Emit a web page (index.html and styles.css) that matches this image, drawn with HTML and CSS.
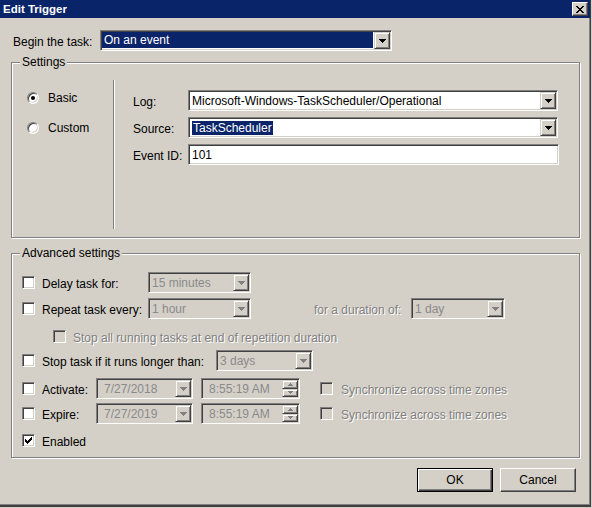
FILE: index.html
```html
<!DOCTYPE html>
<html lang="en">
<head>
    <meta charset="UTF-8">
    <title>Edit Trigger</title>
    <link rel="stylesheet" href="styles.css">
</head>
<body>
    <svg class="defs" width="0" height="0">
        <defs>
            <path id="tri" d="M0 0h7v1h-1v1h-1v1h-1v1h-1v-1h-1v-1h-1v-1h-1z"/>
            <path id="up" d="M2 0h1v1h1v1h1v1h-5v-1h1v-1h1z"/>
            <path id="down" d="M0 0h5v1h-1v1h-1v1h-1v-1h-1v-1h-1z"/>
        </defs>
    </svg>

    <div class="window">
        <div class="titlebar">
            <span class="title">Edit Trigger</span>
            <span class="close-btn">
                <svg width="8" height="7" viewBox="0 0 8 7" shape-rendering="crispEdges">
                    <path d="M0 0h2v1h1v1h2v-1h1v-1h2v1h-1v1h-1v1h-1v1h1v1h1v1h1v1h-2v-1h-1v-1h-2v1h-1v1h-2v-1h1v-1h1v-1h1v-1h-1v-1h-1v-1h-1z"/>
                </svg>
            </span>
        </div>

        <div class="content">
            <div class="begin-row">
                <span class="lbl begin-lbl">Begin the task:</span>
                <div class="combo begin-combo">
                    <div class="combo-text"><span class="hl-fill">On an event</span></div>
                    <span class="drop"><svg width="7" height="4"><use href="#tri"/></svg></span>
                </div>
            </div>

            <div class="group settings">
                <div class="group-title">Settings</div>
                <div class="settings-body">
                    <div class="modes">
                        <div class="mode"><span class="radio"><span class="dot"></span></span><span class="lbl">Basic</span></div>
                        <div class="mode"><span class="radio"></span><span class="lbl">Custom</span></div>
                    </div>
                    <div class="sep"></div>
                    <div class="fields">
                        <div class="field">
                            <span class="lbl field-lbl">Log:</span>
                            <div class="combo w370">
                                <div class="combo-text">Microsoft-Windows-TaskScheduler/Operational</div>
                                <span class="drop"><svg width="7" height="4"><use href="#tri"/></svg></span>
                            </div>
                        </div>
                        <div class="field">
                            <span class="lbl field-lbl">Source:</span>
                            <div class="combo w370">
                                <div class="combo-text"><span class="hl">TaskScheduler</span></div>
                                <span class="drop"><svg width="7" height="4"><use href="#tri"/></svg></span>
                            </div>
                        </div>
                        <div class="field">
                            <span class="lbl field-lbl">Event ID:</span>
                            <div class="combo w371">
                                <div class="combo-text">101</div>
                            </div>
                        </div>
                    </div>
                </div>
            </div>

            <div class="group advanced">
                <div class="group-title">Advanced settings</div>

                <div class="adv-row r-delay">
                    <span class="check"></span>
                    <span class="lbl w106">Delay task for:</span>
                    <div class="combo disabled w103">
                        <div class="combo-text">15 minutes</div>
                        <span class="drop"><svg width="7" height="4"><use href="#tri"/></svg></span>
                    </div>
                </div>

                <div class="adv-row r-repeat">
                    <span class="check"></span>
                    <span class="lbl w106">Repeat task every:</span>
                    <div class="combo disabled w103">
                        <div class="combo-text">1 hour</div>
                        <span class="drop"><svg width="7" height="4"><use href="#tri"/></svg></span>
                    </div>
                    <span class="lbl off duration-lbl">for a duration of:</span>
                    <div class="combo disabled w94">
                        <div class="combo-text">1 day</div>
                        <span class="drop"><svg width="7" height="4"><use href="#tri"/></svg></span>
                    </div>
                </div>

                <div class="adv-row r-stopall">
                    <span class="check off indent"></span>
                    <span class="lbl off">Stop all running tasks at end of repetition duration</span>
                </div>

                <div class="adv-row r-stoptask">
                    <span class="check"></span>
                    <span class="lbl w174">Stop task if it runs longer than:</span>
                    <div class="combo disabled w97">
                        <div class="combo-text">3 days</div>
                        <span class="drop"><svg width="7" height="4"><use href="#tri"/></svg></span>
                    </div>
                </div>

                <div class="adv-row r-activate">
                    <span class="check"></span>
                    <span class="lbl w54">Activate:</span>
                    <div class="combo disabled w97">
                        <div class="combo-text date-text">7/27/2018</div>
                        <span class="drop"><svg width="7" height="4"><use href="#tri"/></svg></span>
                    </div>
                    <div class="combo disabled time">
                        <div class="combo-text time-text">8:55:19 AM</div>
                        <span class="spin">
                            <span class="spin-btn"><svg width="5" height="3"><use href="#up"/></svg></span>
                            <span class="spin-btn"><svg width="5" height="3"><use href="#down"/></svg></span>
                        </span>
                    </div>
                    <span class="check off sync"></span>
                    <span class="lbl off">Synchronize across time zones</span>
                </div>

                <div class="adv-row r-expire">
                    <span class="check"></span>
                    <span class="lbl w54">Expire:</span>
                    <div class="combo disabled w97">
                        <div class="combo-text date-text">7/27/2019</div>
                        <span class="drop"><svg width="7" height="4"><use href="#tri"/></svg></span>
                    </div>
                    <div class="combo disabled time">
                        <div class="combo-text time-text">8:55:19 AM</div>
                        <span class="spin">
                            <span class="spin-btn"><svg width="5" height="3"><use href="#up"/></svg></span>
                            <span class="spin-btn"><svg width="5" height="3"><use href="#down"/></svg></span>
                        </span>
                    </div>
                    <span class="check off sync"></span>
                    <span class="lbl off">Synchronize across time zones</span>
                </div>

                <div class="adv-row r-enabled">
                    <span class="check">
                        <svg width="7" height="7" shape-rendering="crispEdges">
                            <path d="M0 2h1v3h-1zM1 3h1v3h-1zM2 4h1v3h-1zM3 3h1v3h-1zM4 2h1v3h-1zM5 1h1v3h-1zM6 0h1v3h-1z"/>
                        </svg>
                    </span>
                    <span class="lbl">Enabled</span>
                </div>
            </div>

            <div class="buttons">
                <span class="btn default">OK</span>
                <span class="btn">Cancel</span>
            </div>
        </div>
    </div>
</body>
</html>
```

FILE: styles.css
```css
body {
    margin: 0;
    background: #d4d0c8;
    font-family: "Liberation Sans", Arial, sans-serif;
    font-size: 12px;
    color: #000;
}
.defs {
    position: absolute;
}
svg {
    display: block;
    fill: currentColor;
    shape-rendering: crispEdges;
}
.window {
    width: 591px;
    height: 507px;
    box-sizing: border-box;
    border-right: 1px solid #404040;
    border-bottom: 2px solid #404040;
    box-shadow: inset -1px -1px #808080;
    background: #d4d0c8;
}

/* title bar */
.titlebar {
    height: 18px;
    background: #0a246a;
    color: #fff;
    display: flex;
    align-items: center;
    justify-content: space-between;
}
.title {
    font-weight: bold;
    font-size: 11.5px;
    padding-left: 3px;
}
.close-btn {
    width: 16px;
    height: 14px;
    box-sizing: border-box;
    margin-right: 2px;
    background: #d4d0c8;
    color: #000;
    border: 1px solid;
    border-color: #fff #404040 #404040 #fff;
    box-shadow: inset -1px -1px #808080;
    display: flex;
    align-items: center;
    justify-content: center;
}

.content {
    padding: 12px 0 0 11px;
}
.lbl {
    flex: none;
    white-space: nowrap;
}
.lbl.off {
    color: #808080;
    text-shadow: 1px 1px #fff;
}

/* sunken combo / edit boxes */
.combo {
    flex: none;
    display: flex;
    height: 21px;
    box-sizing: border-box;
    padding: 1px;
    background: #fff;
    border: 1px solid;
    border-color: #808080 #fff #fff #808080;
    box-shadow: inset 1px 1px #404040, inset -1px -1px #d4d0c8;
}
.combo-text {
    flex: 1;
    display: flex;
    align-items: center;
    padding-left: 2px;
    white-space: nowrap;
    overflow: hidden;
}
.combo.disabled {
    background: #d4d0c8;
    color: #8a8a8a;
}
.drop {
    width: 16px;
    flex: none;
    box-sizing: border-box;
    background: #d4d0c8;
    border: 1px solid;
    border-color: #d4d0c8 #404040 #404040 #d4d0c8;
    box-shadow: inset 1px 1px #fff, inset -1px -1px #808080;
    display: flex;
    align-items: center;
    justify-content: center;
    color: #000;
}
.disabled .drop {
    color: #808080;
}
.hl {
    background: #0a246a;
    color: #fff;
    padding: 0 1px;
    line-height: 14px;
}
.w370 { width: 370px; }
.w371 { width: 371px; }
.w103 { width: 103px; }
.w97 { width: 97px; }
.w94 { width: 94px; }

/* begin the task */
.begin-row {
    display: flex;
    align-items: center;
    height: 21px;
}
.begin-lbl {
    width: 87px;
    padding: 2px 0 0 2px;
}
.begin-combo {
    width: 292px;
}
.begin-combo .combo-text {
    padding: 0 1px 1px 0;
}
.hl-fill {
    flex: 1;
    align-self: stretch;
    display: flex;
    align-items: center;
    background: #0a246a;
    color: #fff;
    padding-left: 2px;
}

/* group boxes */
.group {
    width: 569px;
    box-sizing: border-box;
    border: 1px solid #808080;
    box-shadow: inset 1px 1px #fff, 1px 1px #fff;
}
.group-title {
    width: fit-content;
    margin: -8px 0 0 8px;
    padding: 0 2px;
    line-height: 14px;
    background: #d4d0c8;
}
.settings {
    margin-top: 11px;
    height: 176px;
}
.advanced {
    margin-top: 15px;
    height: 205px;
}

.settings-body {
    display: flex;
    margin-top: 11px;
}
.modes {
    width: 86px;
    padding: 8px 0 0 15px;
    display: flex;
    flex-direction: column;
    gap: 10px;
}
.mode {
    display: flex;
    align-items: center;
    height: 20px;
    gap: 9px;
}
.radio {
    width: 12px;
    height: 12px;
    box-sizing: border-box;
    border-radius: 50%;
    border: 1px solid;
    border-color: #808080 #fff #fff #808080;
    box-shadow: inset 1px 1px #404040, inset -1px -1px #d4d0c8;
    background: #fff;
    display: flex;
    align-items: center;
    justify-content: center;
}
.dot {
    width: 4px;
    height: 4px;
    border-radius: 50%;
    background: #000;
}
.sep {
    width: 0;
    height: 149px;
    border-left: 1px solid #808080;
    border-right: 1px solid #fff;
}
.fields {
    padding: 10px 0 0 18px;
    display: flex;
    flex-direction: column;
    gap: 6px;
}
.field {
    display: flex;
    align-items: center;
}
.field-lbl {
    width: 55px;
    padding-top: 3px;
}

/* advanced rows */
.adv-row {
    display: flex;
    align-items: center;
    height: 21px;
    padding-left: 10px;
}
.r-delay { margin-top: 12px; }
.r-repeat { margin-top: 5px; }
.r-stopall { margin-top: 7px; }
.r-stoptask { margin-top: 3px; }
.r-activate { margin-top: 7px; }
.r-expire { margin-top: 4px; }
.r-enabled { margin-top: 6px; }

.check {
    flex: none;
    width: 13px;
    height: 13px;
    box-sizing: border-box;
    margin-right: 7px;
    background: #fff;
    border: 1px solid;
    border-color: #808080 #fff #fff #808080;
    box-shadow: inset 1px 1px #404040, inset -1px -1px #d4d0c8;
    display: flex;
    align-items: center;
    justify-content: center;
}
.check.off {
    background: #d4d0c8;
}
.check.indent {
    margin-left: 31px;
}
.check.sync {
    margin: 0 8px 0 20px;
}
.adv-row .lbl {
    padding-top: 2px;
}
.w106 { width: 106px; }
.w174 { width: 174px; }
.w54 { width: 54px; }
.duration-lbl {
    margin-left: 63px;
    width: 97px;
}
.date-text {
    padding-left: 6px;
}
.time {
    width: 99px;
    margin-left: 8px;
}
.time-text {
    padding-left: 6px;
}
.spin {
    width: 16px;
    flex: none;
    display: flex;
    flex-direction: column;
}
.spin-btn {
    flex: 1;
    box-sizing: border-box;
    background: #d4d0c8;
    border: 1px solid;
    border-color: #d4d0c8 #404040 #404040 #d4d0c8;
    box-shadow: inset 1px 1px #fff, inset -1px -1px #808080;
    display: flex;
    align-items: center;
    justify-content: center;
    color: #808080;
}

/* buttons */
.buttons {
    width: 569px;
    box-sizing: border-box;
    padding-right: 4px;
    margin-top: 10px;
    display: flex;
    justify-content: flex-end;
    gap: 7px;
}
.btn {
    width: 76px;
    height: 24px;
    box-sizing: border-box;
    border: 1px solid;
    border-color: #fff #404040 #404040 #fff;
    box-shadow: inset -1px -1px #808080;
    display: flex;
    align-items: center;
    justify-content: center;
}
.btn.default {
    border-color: #000;
    box-shadow: inset 1px 1px #fff, inset -1px -1px #404040, inset -2px -2px #808080;
}
```
